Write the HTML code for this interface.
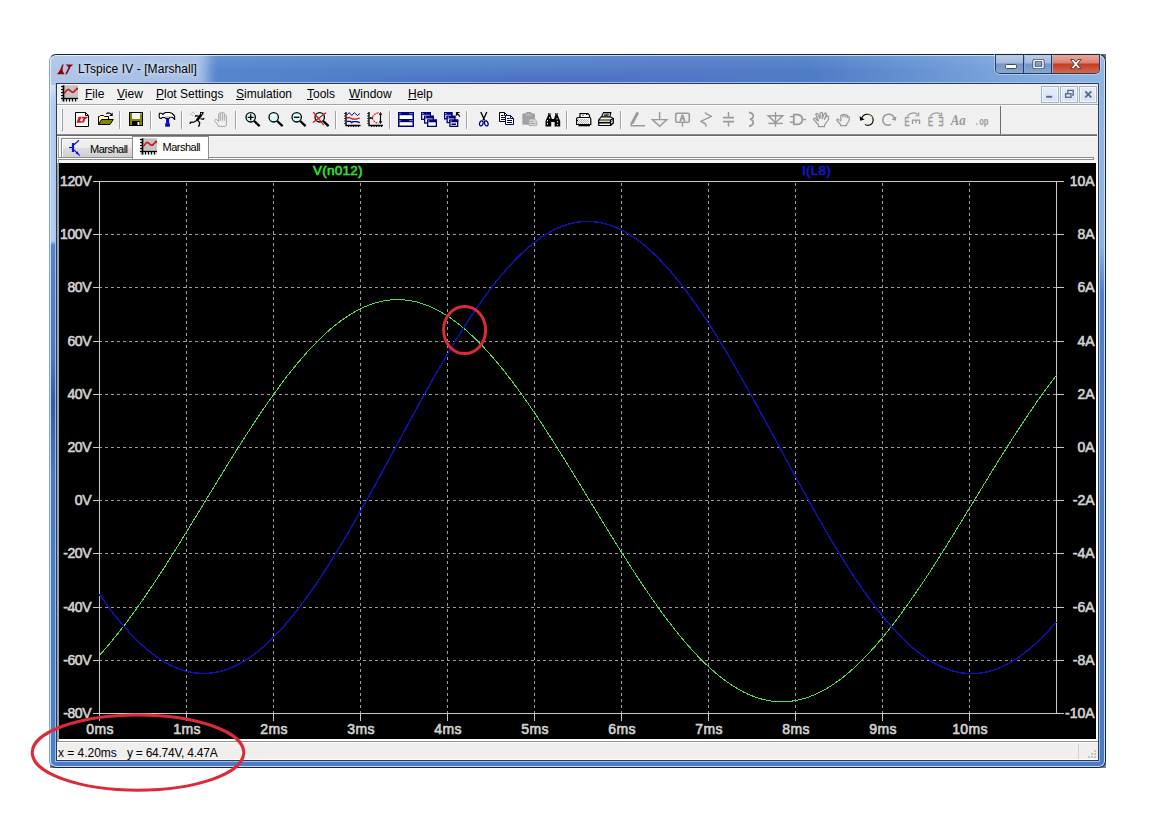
<!DOCTYPE html>
<html lang="en">
<head>
<meta charset="utf-8">
<title>LTspice IV - [Marshall]</title>
<style>
*{box-sizing:border-box;margin:0;padding:0}
html,body{width:1152px;height:824px;overflow:hidden;background:#fff}
body{position:relative;font-family:"Liberation Sans",sans-serif;font-size:12px;color:#000}
.abs{position:absolute}
#frame{position:absolute;left:49px;top:54px;width:1057px;height:714px;border-radius:7px;
  border:1px solid #1b2433;border-left-color:rgba(225,235,250,.35);
  background:
   radial-gradient(ellipse 240px 11px at 470px 26px,rgba(78,84,192,.42),rgba(78,84,192,0)) 0 0/100% 30px no-repeat,
   linear-gradient(to bottom,rgba(255,255,255,.10),rgba(255,255,255,0) 55%) 0 0/100% 30px no-repeat,
   linear-gradient(to right,#6a93d4 0px,#5886ce 120px,#5181c9 300px,#5180ca 450px,#5379c8 620px,#4f7cc6 760px,#6d99d6 900px,#86aee0 1000px,#8fb5e3 1057px) 0 0/100% 30px no-repeat,
   linear-gradient(to bottom,#b4cceb 0px,#b4cceb 186px,#5584cc 190px,#4a79c2 300px,#2f5ca8 350px,#4a79c2 420px,#4f7fc9 714px) 0 0/8px 100% no-repeat,
   linear-gradient(to bottom,#8fb5e3 0px,#8fb5e3 190px,#4f80c9 240px,#4a7ac4 714px) 100% 0/8px 100% no-repeat,
   #4c7cc5;
  box-shadow:inset 0 0 0 1px rgba(214,230,250,.9);overflow:hidden}
#glow{position:absolute;left:-14px;top:-10px;width:172px;height:48px;background:rgba(255,255,255,.47);filter:blur(6px);border-radius:8px}
#client{position:absolute;left:57px;top:84px;width:1041px;height:676px;background:#f0f0f0;
  box-shadow:0 0 0 1px #2b3b52,0 0 0 2px rgba(170,200,240,.85)}
#title{position:absolute;left:78px;top:60px;letter-spacing:.08px;font-size:12px;line-height:18px;white-space:nowrap;color:#000;
  text-shadow:0 0 5px rgba(255,255,255,.8),0 0 8px rgba(255,255,255,.6)}
/* caption buttons */
#capbtn{position:absolute;left:995px;top:54px;width:105px;height:20px;border:1px solid #2a3a55;border-top-color:#1b2433;border-radius:0 0 5px 5px;overflow:hidden;
  box-shadow:0 0 0 1px rgba(215,230,250,.55)}
#capbtn div{position:absolute;top:0;height:18px}
.cb{background:linear-gradient(to bottom,#bccde6 0,#a3bbdd 8px,#7495c7 9px,#86a6d3 18px)}
.cx{background:linear-gradient(to bottom,#eaa89d 0,#d98273 8px,#c43c25 9px,#d2694d 18px)}
/* menu */
#menubar{position:absolute;left:57px;top:84px;width:1041px;height:21px;background:#f0f0f0;border-bottom:1px solid #a4a4a4}
.mi{position:absolute;top:86px;font-size:12px;line-height:16px;white-space:nowrap}
.mi u{text-decoration:underline;text-underline-offset:1px}
.mdi{position:absolute;top:86px;width:18px;height:17px;background:linear-gradient(#e4edf8,#d6e3f4);border:1px solid #a6b2c6;box-shadow:inset 0 0 0 1px #f1f6fc}
/* toolbar */
#toolbar{position:absolute;left:57px;top:105px;width:944px;height:30px;background:#f0f0f0;border-right:1px solid #6d6d6d}
#mline{position:absolute;left:57px;top:105px;width:1041px;height:1px;background:#fdfdfd}
#tbline{position:absolute;left:57px;top:134px;width:1040px;height:3px;background:#686868;border-top:1px solid #8e8e8e;border-bottom:1px solid #fbfbfb}
.sep{position:absolute;top:111px;width:2px;height:18px;border-left:1px solid #a0a0a0;border-right:1px solid #fff}
.ic{position:absolute;top:112px;width:16px;height:15px;overflow:visible}
/* tabs */
.tab{position:absolute;font-family:"Liberation Sans",sans-serif;font-size:11px;white-space:nowrap;letter-spacing:-.5px}
/* plot */
#plotwrap{position:absolute;left:57px;top:163px;width:1041px;height:578px;background:#fff;border-left:2px solid #9aa0a8}
#plot{position:absolute;left:0;top:0;width:1037px;height:576px;background:#000}
svg text{font-family:"Liberation Sans",sans-serif}
.ax{font-weight:normal;font-size:14px;fill:#d2d2d2;stroke:#d2d2d2;stroke-width:.6px;letter-spacing:.35px}
.axl{letter-spacing:-.4px}
.axr{letter-spacing:0}
.axt{letter-spacing:.25px;font-size:13.5px}
/* status */
#status{position:absolute;left:57px;top:741px;width:1041px;height:19px;background:#f0efee;border-top:1px solid #8f8f8f;box-shadow:inset 0 1px 0 #fff,inset 0 -1px 0 #fff}
#stext,#stext2{position:absolute;left:58px;top:745px;font-size:12px;line-height:16px;white-space:pre;letter-spacing:-.25px}
#stext{letter-spacing:-.03px}
#stext2{left:127px}
</style>
</head>
<body>
<div class="abs" style="left:1101px;top:54px;width:5px;height:5px;background:#6a727c"></div>
<div class="abs" style="left:1101px;top:763px;width:5px;height:5px;background:#7a828c"></div>
<div class="abs" style="left:50px;top:763px;width:5px;height:5px;background:#7a828c"></div>
<div id="frame"><div id="glow"></div></div>
<div id="client"></div>

<!-- title bar -->
<svg class="abs" style="left:57px;top:63.500px" width="17" height="12" viewBox="0 0 17 12">
  <path d="M5.300 0.400L6.800 0.400Q4 5.800 7.600 10.200L0 10.200Q3.600 6 5.300 0.400Z" fill="#8e0404"/>
  <path d="M8.400 0.400H16.100L13.500 3.100L9.900 10.200H8.300L11.500 3.200Q10.200 1.500 8.400 0.400Z" fill="#8e0404"/>
</svg>
<div id="title">LTspice IV - [Marshall]</div>

<div id="capbtn">
  <div class="cb" style="left:0;width:28px;border-right:1px solid #2a3a55"></div>
  <div class="cb" style="left:29px;width:27px;border-right:1px solid #2a3a55"></div>
  <div class="cx" style="left:57px;width:46px"></div>
</div>
<svg class="abs" style="left:996px;top:55px" width="104" height="18" viewBox="0 0 104 18">
  <rect x="9.5" y="9.5" width="11" height="4" rx="1" fill="#fff" stroke="#3b4a63" stroke-width="1"/>
  <rect x="38" y="5.500" width="9" height="7" rx="0.800" fill="none" stroke="#3b4a63" stroke-width="3.200"/>
  <rect x="38" y="5.500" width="9" height="7" rx="0.800" fill="none" stroke="#fff" stroke-width="1.500"/>
  <rect x="40" y="7.500" width="5" height="3" fill="#7f9dcb"/>
  <path d="M74.5 4.5h3.2l2.1 2.7 2.1-2.7h3.2l-3.7 4.6 3.7 4.6h-3.2l-2.1-2.7-2.1 2.7h-3.2l3.7-4.6z" fill="#fff" stroke="#5a3a3a" stroke-width="1" stroke-linejoin="round"/>
</svg>

<!-- menu bar -->
<div id="menubar"></div>
<svg class="abs" style="left:61px;top:85px" width="17" height="17" viewBox="0 0 17 17">
  <rect x="0" y="0.300" width="17" height="16.400" fill="#e0e0e0"/>
  <rect x="3" y="0.300" width="14" height="13" fill="#c4c4c4"/>
  <path d="M2.500 0.300V16.600" stroke="#000" stroke-width="1.700" fill="none"/>
  <path d="M0 13.500H17" stroke="#000" stroke-width="1.300" fill="none"/>
  <path d="M0 1.500h2M0 4.500h2M0 7.500h2M0 10.500h2M5.500 14v2.600M8.500 14v2.600M11.500 14v2.600M14.500 14v2.600" stroke="#000" stroke-width="1.100"/>
  <path d="M3.200 8.600L6.500 4.600H8L11 7.100H12.500L16 3.600" stroke="#d81414" stroke-width="1.600" fill="none" stroke-linejoin="round"/>
  <circle cx="16" cy="3.600" r="1.100" fill="#d81414"/>
</svg>
<div class="mi" style="left:85px"><u>F</u>ile</div>
<div class="mi" style="left:117px"><u>V</u>iew</div>
<div class="mi" style="left:156px"><u>P</u>lot Settings</div>
<div class="mi" style="left:236px"><u>S</u>imulation</div>
<div class="mi" style="left:307px"><u>T</u>ools</div>
<div class="mi" style="left:349px"><u>W</u>indow</div>
<div class="mi" style="left:408px"><u>H</u>elp</div>
<div class="mdi" style="left:1041px"></div>
<div class="mdi" style="left:1060px"></div>
<div class="mdi" style="left:1079px"></div>
<svg class="abs" style="left:1041px;top:86px" width="56" height="17" viewBox="0 0 56 17">
  <rect x="5.200" y="9.800" width="6" height="1.900" fill="#5a6982"/>
  <path d="M26.800 7v-2.600h5.400v4.800h-1.200" stroke="#5a6982" stroke-width="1.300" fill="none"/>
  <rect x="24.600" y="7.700" width="5.400" height="3.600" fill="none" stroke="#5a6982" stroke-width="1.300"/>
  <path d="M44.300 5.400l6 6M50.300 5.400l-6 6" stroke="#5a6982" stroke-width="1.900"/>
</svg>

<!-- toolbar -->
<div id="toolbar"></div>
<div id="mline"></div>
<div id="tbline"></div>
<div class="abs" style="left:61px;top:109px;width:2px;height:22px;border-left:1px solid #fff;border-right:1px solid #a0a0a0;border-bottom:1px solid #a0a0a0"></div>
<div class="sep" style="left:119px"></div>
<div class="sep" style="left:150px"></div>
<div class="sep" style="left:181px"></div>
<div class="sep" style="left:235px"></div>
<div class="sep" style="left:335px"></div>
<div class="sep" style="left:389px"></div>
<div class="sep" style="left:466px"></div>
<div class="sep" style="left:566px"></div>
<div class="sep" style="left:620px"></div>
<!-- toolbar icons -->
<!-- new -->
<svg class="ic" style="left:75px" viewBox="0 0 16 15">
  <path d="M0.500 0.500H10.500L13.500 3.500V14.500H0.500Z" fill="#fff" stroke="#000" stroke-width="1"/>
  <path d="M10.500 0.500V3.500H13.500" fill="none" stroke="#000" stroke-width="1"/>
  <path d="M3.700 4.800H6.700L4.700 9H6.900L6.100 10.800H1.500ZM7.200 4.800H12.900L12.100 6.600H10.700L8.700 10.800H6.500L8.500 6.600H6.400Z" fill="#e01020"/>
</svg>
<!-- open -->
<svg class="ic" style="left:98px" viewBox="0 0 16 15">
  <path d="M0.500 12.500V4.500H1.500L2.500 3.500H5.500L6.500 4.500H10.500V7.500" fill="#ffff9c" stroke="#000" stroke-width="1"/>
  <path d="M0.500 12.500L3.500 7.500H15.300L12 12.500Z" fill="#848400" stroke="#000" stroke-width="1" stroke-linejoin="round"/>
  <path d="M8.300 1.800Q10.500 -0.300 13.300 2.200" fill="none" stroke="#000" stroke-width="1.100"/>
  <path d="M14.700 0.500V4H11.200Z" fill="#000"/>
</svg>
<!-- save -->
<svg class="ic" style="left:129px" viewBox="0 0 16 15">
  <rect x="0.500" y="0.500" width="13" height="13" fill="#848400" stroke="#000" stroke-width="1"/>
  <rect x="3" y="1" width="8" height="6" fill="#f4f4f4"/>
  <rect x="11.800" y="1.300" width="1" height="1.200" fill="#e8e8e8"/>
  <rect x="3" y="9" width="8" height="4.500" fill="#000"/>
  <rect x="8.500" y="10" width="2" height="3" fill="#f4f4f4"/>
</svg>
<!-- hammer -->
<svg class="ic" style="left:160px" viewBox="0 0 16 15">
  <path d="M-0.700 1.300L1.700 1.200L2.800 2.500L5.200 0.500H9.750L12.200 1.500L14.600 4L14.700 7.500L13.800 6.700L12.700 5.300H9.750L9 6.400H5.750L4.700 5.500L2.500 5.300L1.200 6.500L-0.300 6.100L-0.800 4.800Z" fill="#fff" stroke="#000" stroke-width="1.100" stroke-linejoin="round"/>
  <path d="M5 4.700H10.500" stroke="#c4c4c4" stroke-width="1.100"/>
  <rect x="6.100" y="6.400" width="3" height="5" fill="#0808b8"/>
  <rect x="5.200" y="11.200" width="4.700" height="3.500" fill="#0808c0"/>
</svg>
<!-- run -->
<svg class="ic" style="left:191px" viewBox="0 0 16 15">
  <path d="M9 0H12.900L12.300 1.200V2.700H9Z" fill="#000"/>
  <rect x="10" y="0.900" width="1" height="0.900" fill="#fff"/>
  <path d="M10.300 2.600L5.900 8.500" stroke="#000" stroke-width="2.600" fill="none"/>
  <path d="M8.400 4.300L5 3.700L4 4.600" stroke="#000" stroke-width="1.200" fill="none"/>
  <path d="M9.600 6.700L12.200 7.400L13.300 6.100" stroke="#000" stroke-width="1.200" fill="none"/>
  <path d="M6 8.300L2.800 10.200L-0.600 10.400L-0.800 11.900" stroke="#000" stroke-width="1.300" fill="none"/>
  <path d="M6.900 8.600L8.700 10.700L8.300 13.200L7.400 14.700" stroke="#000" stroke-width="1.300" fill="none"/>
  <path d="M1.200 0.200L3 0.500M-0.800 2L1.200 2.400M3.200 1.200L3.900 1.700M1.200 3.200L2 3.700" stroke="#a8a8a8" stroke-width="0.900" fill="none"/>
</svg>
<!-- hand (disabled) -->
<svg class="ic" style="left:214px" viewBox="0 0 16 15">
  <path d="M4.700 9.600V1.800Q5.500 0.900 6.300 1.800V8.800M6.300 1.800V0.800Q7.300 -0.200 8.300 0.800V8.800M8.300 1Q9.300 0 10.300 1.100V8.800M10.300 3.500Q11.400 2.500 12.400 3.700V13L11.600 14.400H4.300V13.800L0.500 8.400Q1.300 6.900 2.400 7.400L4.700 9.600" fill="none" stroke="#a4a4a4" stroke-width="1" stroke-linejoin="round"/>
</svg>
<!-- zoom in -->
<svg class="ic" style="left:245px" viewBox="0 0 16 15">
  <circle cx="5.700" cy="5.300" r="4.700" fill="#d6fbfb" stroke="#000" stroke-width="1.300"/>
  <path d="M9.200 9L14.600 14.200" stroke="#000" stroke-width="2.300"/>
  <path d="M2.700 5.300H8.700M5.700 2.300V8.300" stroke="#000" stroke-width="1.300"/>
</svg>
<!-- zoom -->
<svg class="ic" style="left:268px" viewBox="0 0 16 15">
  <circle cx="5.700" cy="5.300" r="4.700" fill="#d6fbfb" stroke="#000" stroke-width="1.300"/>
  <path d="M9.200 9L14.600 14.200" stroke="#000" stroke-width="2.300"/>
  <path d="M3 6L6.500 2.500" stroke="#fff" stroke-width="1.400"/>
</svg>
<!-- zoom out -->
<svg class="ic" style="left:291px" viewBox="0 0 16 15">
  <circle cx="5.700" cy="5.300" r="4.700" fill="#d6fbfb" stroke="#000" stroke-width="1.300"/>
  <path d="M9.200 9L14.600 14.200" stroke="#000" stroke-width="2.300"/>
  <path d="M2.900 5.300H8.500" stroke="#000" stroke-width="1.300"/>
</svg>
<!-- zoom cancel -->
<svg class="ic" style="left:314px" viewBox="0 0 16 15">
  <circle cx="5.700" cy="5.300" r="4.700" fill="#d6fbfb" stroke="#000" stroke-width="1.300"/>
  <path d="M9.200 9L14.600 14.200" stroke="#000" stroke-width="2.300"/>
  <path d="M-0.700 0.200L9.800 13.200M-1 10.600L12 0.800" stroke="#e01010" stroke-width="1.300"/>
</svg>
<!-- plot pane 1 -->
<svg class="ic" style="left:344px" viewBox="0 0 16 15">
  <path d="M2 0V13.500H16.500" stroke="#000" stroke-width="1.400" fill="none"/>
  <path d="M0.300 1.500H1.500M0.300 4H1.500M0.300 6.500H1.500M0.300 9H1.500M0.300 11.500H1.500M4.500 14V15M7 14V15M9.500 14V15M12 14V15M14.500 14V15" stroke="#000" stroke-width="1"/>
  <path d="M2.800 3L5.200 0.600L7.800 3.400L10.400 0.600L13.400 3.600L15.800 1.600" stroke="#000080" stroke-width="1" fill="none"/>
  <path d="M2.800 6L5.500 5.500L8.500 7L12 7.200L15.800 6" stroke="#e01010" stroke-width="1.300" fill="none"/>
  <path d="M2.800 9.300H6.500L7.500 10.600L9 9.600H13L15.800 10.600" stroke="#000090" stroke-width="1.300" fill="none"/>
</svg>
<!-- plot pane 2 -->
<svg class="ic" style="left:367px" viewBox="0 0 16 15">
  <path d="M2 0V13.500H16" stroke="#000" stroke-width="1.400" fill="none"/>
  <path d="M0.300 1.500H1.500M0.300 4H1.500M0.300 6.500H1.500M0.300 9H1.500M0.300 11.500H1.500M4.500 14V15M7 14V15M9.500 14V15M12 14V15M14.500 14V15" stroke="#000" stroke-width="1"/>
  <path d="M11.500 0.600Q5.500 2.500 5.500 6Q5.500 9.500 11.500 11.600" stroke="#e01010" stroke-width="1.100" stroke-dasharray="2 0.800" fill="none"/>
  <path d="M13.500 1.500V10.500" stroke="#000" stroke-width="1.200"/>
  <path d="M13.500 0L15.300 2.800H11.700ZM13.500 12L15.300 9.200H11.700Z" fill="#000"/>
  <path d="M3 6H5.500M3.800 5L3 6L3.800 7M4.700 5L5.500 6L4.700 7" stroke="#000" stroke-width="0.900" fill="none"/>
</svg>
<!-- tile -->
<svg class="ic" style="left:398px" viewBox="0 0 16 15">
  <rect x="0.750" y="0.750" width="14.500" height="13.500" fill="#fff" stroke="#000080" stroke-width="1.500"/>
  <rect x="0" y="0" width="16" height="3.200" fill="#000080"/>
  <rect x="0" y="7" width="16" height="3.200" fill="#000080"/>
  <g fill="#fff"><rect x="1.500" y="1.200" width="1" height="1"/><rect x="11.500" y="1.200" width="1" height="1"/><rect x="13.500" y="1.200" width="1" height="1"/><rect x="1.500" y="8.200" width="1" height="1"/><rect x="11.500" y="8.200" width="1" height="1"/><rect x="13.500" y="8.200" width="1" height="1"/></g>
</svg>
<!-- cascade -->
<svg class="ic" style="left:421px" viewBox="0 0 16 15">
  <g stroke="#000080" stroke-width="1.300" fill="#fff">
   <rect x="0.650" y="0.650" width="8.700" height="6.700"/><rect x="3.650" y="4.350" width="8.700" height="6.700"/><rect x="6.650" y="8.150" width="8.700" height="6.200"/>
  </g>
  <g fill="#000080"><rect x="0" y="0" width="10" height="2.800"/><rect x="3" y="3.700" width="10" height="2.800"/><rect x="6" y="7.500" width="10" height="2.800"/></g>
  <g fill="#fff"><rect x="1.300" y="1" width="1" height="1"/><rect x="4.300" y="4.700" width="1" height="1"/><rect x="7.300" y="8.500" width="1" height="1"/></g>
</svg>
<!-- cascade + arrow -->
<svg class="ic" style="left:444px" viewBox="0 0 16 15">
  <g stroke="#000080" stroke-width="1.300" fill="#fff">
   <rect x="0.650" y="0.650" width="7.200" height="6.200"/><rect x="3.150" y="4.350" width="7.700" height="6.200"/><rect x="5.950" y="8.150" width="7.700" height="6.200"/>
  </g>
  <g fill="#000080"><rect x="0" y="0" width="8.500" height="2.800"/><rect x="2.500" y="3.700" width="9" height="2.800"/><rect x="5.300" y="7.500" width="9" height="2.800"/></g>
  <g fill="#fff"><rect x="1.300" y="1" width="1" height="1"/><rect x="3.800" y="4.700" width="1" height="1"/><rect x="6.600" y="8.500" width="1" height="1"/></g>
  <rect x="7.500" y="11.500" width="4.500" height="1.500" fill="#000"/>
  <path d="M12.300 0.500H15.500M12.500 0.300V3.800M12.600 0.600L16 4.600" stroke="#000" stroke-width="1.200" fill="none"/>
</svg>
<!-- cut -->
<svg class="ic" style="left:476px" viewBox="0 0 16 15">
  <path d="M4.800 0L8.600 8.200M10.800 0L7 8.200" stroke="#000" stroke-width="1.400" fill="none"/>
  <ellipse cx="5.300" cy="11.400" rx="1.700" ry="2.600" fill="none" stroke="#000080" stroke-width="1.300" transform="rotate(20 5.300 11.400)"/>
  <ellipse cx="10.300" cy="11.400" rx="1.700" ry="2.600" fill="none" stroke="#000080" stroke-width="1.300" transform="rotate(-20 10.300 11.400)"/>
</svg>
<!-- copy -->
<svg class="ic" style="left:499px" viewBox="0 0 16 15">
  <path d="M0.500 0.500H5.500L8.500 3.500V9.500H0.500Z" fill="#fff" stroke="#000" stroke-width="1"/>
  <path d="M5.500 0.500V3.500H8.500" fill="none" stroke="#000" stroke-width="1"/>
  <path d="M2 3.500H4.500M2 5.500H6M2 7.500H6" stroke="#000" stroke-width="1"/>
  <path d="M6.500 3.500H11.500L14.500 6.500V12.500H6.500Z" fill="#fff" stroke="#000080" stroke-width="1"/>
  <path d="M11.500 3.500V6.500H14.500" fill="none" stroke="#000080" stroke-width="1"/>
  <path d="M8 6.500H10.500M8 8.500H13M8 10.500H13" stroke="#000" stroke-width="1"/>
</svg>
<!-- paste (disabled) -->
<svg class="ic" style="left:522px" viewBox="0 0 16 15">
  <rect x="0.300" y="1.300" width="12.700" height="11.500" rx="1.500" fill="#a2a2a2"/>
  <rect x="4" y="0" width="5.500" height="2.600" rx="1" fill="#a2a2a2"/>
  <rect x="4" y="2.400" width="5.500" height="1" fill="#c8c8c8"/>
  <path d="M7 7H12.500L14.800 9.200V13.600H7Z" fill="#d4d4d4" stroke="#a2a2a2" stroke-width="0.800"/>
  <path d="M8.500 9.500H11M8.500 11.500H13" stroke="#a2a2a2" stroke-width="1"/>
</svg>
<!-- find -->
<svg class="ic" style="left:545px" viewBox="0 0 16 15">
  <path d="M3.200 1H5.500V3L6.800 7H9L10.300 3V1H12.600V3L15.200 9V14.500H9.600V10H6.200V14.500H0.500V9L3.200 3Z" fill="#000"/>
  <path d="M4 1.800H4.800M11 1.800H11.800M2.500 8V9.500M2.500 11V12.500M12 6V7.500M12.600 9V10.500M12.600 12V13.200M4.500 5V6.500" stroke="#fff" stroke-width="0.900"/>
</svg>
<!-- print setup -->
<svg class="ic" style="left:576px" viewBox="0 0 16 15">
  <path d="M4 5V1.500H12L13.500 3.500V5" fill="#fff" stroke="#000" stroke-width="1.200"/>
  <path d="M6 2.500L7 3.500L8 2.500M10 2.500H11.500" stroke="#000" stroke-width="0.900" fill="none"/>
  <path d="M2.500 5.500H13.500Q14.800 5.500 14.800 7V12.500H0.600V7.500Q0.600 5.500 2.500 5.500Z" fill="#fff" stroke="#000" stroke-width="1.200"/>
  <path d="M2 7.500H13M2 9.500H13M2 11.500H13" stroke="#b4b4b4" stroke-width="1" stroke-dasharray="1 1"/>
  <path d="M3 8.500H13M3 10.500H13" stroke="#b4b4b4" stroke-width="1" stroke-dasharray="1 1"/>
  <path d="M2.500 13.600H14" stroke="#000" stroke-width="1.400"/>
  <path d="M0.600 8.500H2" stroke="#000" stroke-width="1"/>
</svg>
<!-- print -->
<svg class="ic" style="left:598px" viewBox="0 0 16 15">
  <path d="M3.500 5L5.500 0.600H12.800L11.800 5Z" fill="#fff" stroke="#000" stroke-width="1.100"/>
  <path d="M6.300 2.200H11M5.800 3.700H10.500" stroke="#000" stroke-width="0.900"/>
  <path d="M0.700 8L3 5H12.500L15.300 6.500V11L12.500 13.500H0.700Z" fill="#fff" stroke="#000" stroke-width="1.200" stroke-linejoin="round"/>
  <path d="M0.700 8H12.500V13.500M12.500 8L15.300 6.500" stroke="#000" stroke-width="1.100" fill="none"/>
  <path d="M1 10.700H12.300" stroke="#000" stroke-width="1.700"/>
  <path d="M6.500 9.600H9.500" stroke="#e0e000" stroke-width="1.100"/>
  <path d="M13.300 9.500L14.600 8.500M13.300 12L14.600 11" stroke="#000" stroke-width="0.900"/>
</svg>
<!-- wire pencil (disabled) -->
<svg class="ic" style="left:630px" viewBox="0 0 16 15">
  <path d="M7.800 0.300L2 11.500" stroke="#9a9a9a" stroke-width="2.85" fill="none"/>
  <path d="M1.200 10.500V13.700H15" stroke="#9a9a9a" stroke-width="1.45" fill="none"/>
</svg>
<!-- ground -->
<svg class="ic" style="left:652px" viewBox="0 0 16 15">
  <path d="M7.600 0V7.500M0.400 7.600H14.800L7.600 14.300Z" stroke="#9a9a9a" stroke-width="1.45" fill="none" stroke-linejoin="miter"/>
</svg>
<!-- label -->
<svg class="ic" style="left:675px" viewBox="0 0 16 15">
  <rect x="0.700" y="1.200" width="13.600" height="9" rx="1.200" fill="none" stroke="#9a9a9a" stroke-width="1.55"/>
  <path d="M7.500 10.200V14.600" stroke="#9a9a9a" stroke-width="1.45"/>
  <text x="7.500" y="9" text-anchor="middle" font-size="9" font-weight="bold" fill="#909090" stroke="#909090" stroke-width="0.350" style="font-family:'Liberation Mono',monospace">A</text>
</svg>
<!-- resistor -->
<svg class="ic" style="left:699px" viewBox="0 0 16 15">
  <path d="M6.300 0.200L7 1.600L12.400 4.400L1.800 9.400L6.600 12L7 14.600" stroke="#9a9a9a" stroke-width="1.45" fill="none" stroke-linejoin="round"/>
</svg>
<!-- capacitor -->
<svg class="ic" style="left:722px" viewBox="0 0 16 15">
  <path d="M6.500 0V5M6.500 10.300V14.600" stroke="#9a9a9a" stroke-width="1.45"/>
  <path d="M1 5.600H12M1 9.700H12" stroke="#9a9a9a" stroke-width="1.75"/>
</svg>
<!-- inductor -->
<svg class="ic" style="left:745px" viewBox="0 0 16 15">
  <path d="M4 0.400Q8.500 1.500 8.300 4.200Q8 6.600 5 7.200Q8.500 8 8.300 10.600Q8 13.200 4 14.400" stroke="#9a9a9a" stroke-width="1.65" fill="none"/>
</svg>
<!-- diode -->
<svg class="ic" style="left:768px" viewBox="0 0 16 15">
  <path d="M7.500 0V14.800" stroke="#9a9a9a" stroke-width="1.35"/>
  <path d="M0.300 3.700H14.700L7.500 10.700Z" fill="none" stroke="#9a9a9a" stroke-width="1.55"/>
  <path d="M0.300 11.400H14.700" stroke="#9a9a9a" stroke-width="1.45"/>
</svg>
<!-- gate -->
<svg class="ic" style="left:790px" viewBox="0 0 16 15">
  <path d="M3.800 2.600H7.500Q12.300 3 12.300 7.500Q12.300 12 7.500 12.400H3.800Z" fill="none" stroke="#9a9a9a" stroke-width="1.75"/>
  <path d="M0 4.600H3.500M0 10.200H3.500M12.500 7.500H16" stroke="#9a9a9a" stroke-width="1.45"/>
</svg>
<!-- move hand -->
<svg class="ic" style="left:813px" viewBox="0 0 16 15">
  <path d="M4.500 9L2.500 6.200Q1 5.600 0.300 7.200L5.500 13V14.500H11.500V13L15.500 7.500V4.500Q14.500 3.200 13.500 4.500L11 8M11.500 7.500L13.500 2Q12.800 0.500 11.500 1.200L9 7M9.200 6.500L9.500 1.200Q8.500 -0.200 7.300 1L7 6.500M7 7L4.800 1.800Q3.500 1 2.800 2.300L5.500 9.500" fill="none" stroke="#9a9a9a" stroke-width="1.25" stroke-linejoin="round"/>
</svg>
<!-- drag hand -->
<svg class="ic" style="left:836px" viewBox="0 0 16 15">
  <path d="M3.500 8.500L1.800 7Q0.500 7 0.800 8.300L4.500 12.500V13.700H10.500V12.500L13.200 8.500V5Q12.300 3.800 11.300 4.800V6M11.300 5.500V3.600Q10.200 2.500 9.200 3.500V5.500M9.200 5V2.800Q8 1.800 7 2.800V5.500M7 5V3.500Q5.800 2.500 4.800 3.600V9.500" fill="none" stroke="#9a9a9a" stroke-width="1.25" stroke-linejoin="round"/>
</svg>
<!-- undo -->
<svg class="ic" style="left:859px" viewBox="0 0 16 15">
  <path d="M2.600 6.200Q4.500 1.800 9 2.300Q14 3.200 14.200 8Q14 12.800 9.300 13.300Q7.200 13.400 6 12.300" fill="none" stroke="#000" stroke-width="1.150"/>
  <path d="M0.600 4.200L1.200 8.800L5.600 7.600Z" fill="#000"/>
  <path d="M9.500 2.400Q12.500 3 13.500 6" fill="none" stroke="#e6e878" stroke-width="0.700"/>
</svg>
<!-- redo -->
<svg class="ic" style="left:882px" viewBox="0 0 16 15">
  <path d="M12.400 6.200Q10.500 1.800 6 2.300Q1 3.200 0.800 8Q1 12.800 5.700 13.300Q7.800 13.400 9 12.300" fill="none" stroke="#9a9a9a" stroke-width="1.55"/>
  <path d="M14.400 4.200L13.800 8.800L9.400 7.600Z" fill="#9a9a9a"/>
</svg>
<!-- rotate -->
<svg class="ic" style="left:905px" viewBox="0 0 17 15">
  <text x="-0.500" y="14.600" font-size="13" font-weight="normal" fill="#9a9a9a" stroke="#9a9a9a" stroke-width="0.550" textLength="5.300" lengthAdjust="spacingAndGlyphs">E</text>
  <path d="M7.500 8.200H16M8 8.200V12.200M11.800 8.200V11.200M15.500 8.200V12.200" stroke="#9a9a9a" stroke-width="1.45" fill="none"/>
  <path d="M2.500 3.500Q8 -1.500 13.500 2" stroke="#9a9a9a" stroke-width="1.25" fill="none"/>
  <path d="M14.500 0V3.500H11" stroke="#9a9a9a" stroke-width="1.25" fill="none"/>
</svg>
<!-- mirror -->
<svg class="ic" style="left:928px" viewBox="0 0 17 15">
  <text x="0" y="14.600" font-size="13" font-weight="normal" fill="#9a9a9a" stroke="#9a9a9a" stroke-width="0.550" textLength="5.300" lengthAdjust="spacingAndGlyphs">E</text>
  <text x="0" y="14.600" font-size="13" font-weight="normal" fill="#9a9a9a" stroke="#9a9a9a" stroke-width="0.550" textLength="5.300" lengthAdjust="spacingAndGlyphs" transform="translate(16.500 0) scale(-1 1)">E</text>
  <path d="M2.500 3.500Q8 -1.500 13.500 2" stroke="#9a9a9a" stroke-width="1.25" fill="none"/>
  <path d="M14.500 0V3.500H11" stroke="#9a9a9a" stroke-width="1.25" fill="none"/>
</svg>
<!-- text -->
<svg class="ic" style="left:951px" viewBox="0 0 16 15">
  <text x="-0.300" y="12.800" font-size="15" font-weight="bold" font-style="italic" fill="#9a9a9a" textLength="15" lengthAdjust="spacingAndGlyphs" style="font-family:'Liberation Serif',serif">Aa</text>
</svg>
<!-- spice directive -->
<svg class="ic" style="left:974px" viewBox="0 0 16 15">
  <text x="0.500" y="12.600" font-size="11" font-weight="bold" fill="#9a9a9a" textLength="14" lengthAdjust="spacingAndGlyphs" style="font-family:'Liberation Mono',monospace">.op</text>
</svg>
<!-- tabs -->
<div class="abs" style="left:58px;top:137px;width:1039px;height:24px;border-left:1px solid #a0a0a0;background:#f0f0f0;box-shadow:inset 1px 0 0 #fff"></div>
<div class="abs" style="left:58px;top:157px;width:1036px;height:3px;border:1px solid #8c8c8c;border-left:none;background:#fff"></div>
<div class="abs" style="left:58px;top:160px;width:1040px;height:3px;background:#f7f7f7;border-left:1px solid #a0a0a0"></div>
<div class="abs" style="left:61px;top:138px;width:72px;height:20px;border:1px solid #8e8e8e;box-shadow:inset 1px 1px 0 #fff;background:linear-gradient(to bottom,#f2f2f2 0,#ebebeb 50%,#dddddd 51%,#cfcfcf 100%)"></div>
<div class="abs" style="left:132px;top:136px;width:77px;height:23px;border:1px solid #8e8e8e;border-bottom:none;background:#fff"></div>
<svg class="abs" style="left:68px;top:139px" width="14" height="18" viewBox="0 0 14 18">
  <path d="M1 8.500H4.500" stroke="#1010e0" stroke-width="1.200" fill="none"/>
  <path d="M5 4V13" stroke="#1010e0" stroke-width="2.200" fill="none"/>
  <path d="M6 5.700L11 1.200M6 10.800L11.800 16.600" stroke="#1010e0" stroke-width="1.200" fill="none"/>
  <path d="M10.800 15.700L7.600 14.400L9.700 12.300Z" fill="#1010e0"/>
</svg>
<div class="tab" style="left:90px;top:144px;line-height:11px">Marshall</div>
<svg class="abs" style="left:140px;top:138px" width="17" height="17" viewBox="0 0 17 17">
  <rect x="0" y="0.300" width="17" height="16.400" fill="#e0e0e0"/>
  <rect x="3" y="0.300" width="14" height="13" fill="#c4c4c4"/>
  <path d="M2.500 0.300V16.600" stroke="#000" stroke-width="1.700" fill="none"/>
  <path d="M0 13.500H17" stroke="#000" stroke-width="1.300" fill="none"/>
  <path d="M0 1.500h2M0 4.500h2M0 7.500h2M0 10.500h2M5.500 14v2.600M8.500 14v2.600M11.500 14v2.600M14.500 14v2.600" stroke="#000" stroke-width="1.100"/>
  <path d="M3.200 8.600L6.500 4.600H8L11 7.100H12.500L16 3.600" stroke="#d81414" stroke-width="1.600" fill="none" stroke-linejoin="round"/>
  <circle cx="16" cy="3.600" r="1.100" fill="#d81414"/>
</svg>
<div class="tab" style="left:162.5px;top:142px;line-height:11px">Marshall</div>

<!-- plot -->
<div id="plotwrap"></div>
<svg class="abs" style="left:59px;top:163px" width="1037" height="576" viewBox="0 0 1037 576">
<rect width="1037" height="576" fill="#000"/>
<path d="M127.5 20V549.5 M214.5 20V549.5 M301.5 20V549.5 M388.5 20V549.5 M475.5 20V549.5 M562.5 20V549.5 M649.5 20V549.5 M736.5 20V549.5 M823.5 20V549.5 M910.5 20V549.5 M40 71.5H996.5 M40 124.5H996.5 M40 178.5H996.5 M40 231.5H996.5 M40 284.5H996.5 M40 337.5H996.5 M40 390.5H996.5 M40 444.5H996.5 M40 497.5H996.5" stroke="#9c9c9c" stroke-width="1" stroke-dasharray="3 3" fill="none" shape-rendering="crispEdges"/>
<path d="M40.5 18.5H997.5V550.5H40.5Z M33.5 18.5H40.5M997.5 18.5H1004.5 M33.5 71.5H40.5M997.5 71.5H1004.5 M33.5 124.5H40.5M997.5 124.5H1004.5 M33.5 178.5H40.5M997.5 178.5H1004.5 M33.5 231.5H40.5M997.5 231.5H1004.5 M33.5 284.5H40.5M997.5 284.5H1004.5 M33.5 337.5H40.5M997.5 337.5H1004.5 M33.5 390.5H40.5M997.5 390.5H1004.5 M33.5 444.5H40.5M997.5 444.5H1004.5 M33.5 497.5H40.5M997.5 497.5H1004.5 M33.5 550.5H40.5M997.5 550.5H1004.5 M40.5 550.5V557.5 M127.5 550.5V557.5 M214.5 550.5V557.5 M301.5 550.5V557.5 M388.5 550.5V557.5 M475.5 550.5V557.5 M562.5 550.5V557.5 M649.5 550.5V557.5 M736.5 550.5V557.5 M823.5 550.5V557.5 M910.5 550.5V557.5" stroke="#c8c8c8" stroke-width="1" fill="none" shape-rendering="crispEdges"/>
<path d="M40.5 492.3 L42.7 489.9 L44.8 487.4 L47.0 484.9 L49.2 482.4 L51.4 479.8 L53.5 477.1 L55.7 474.5 L57.9 471.8 L60.1 469.0 L62.2 466.2 L64.4 463.4 L66.6 460.6 L68.8 457.7 L70.9 454.7 L73.1 451.8 L75.3 448.8 L77.5 445.7 L79.7 442.7 L81.8 439.6 L84.0 436.4 L86.2 433.3 L88.3 430.1 L90.5 426.9 L92.7 423.6 L94.9 420.4 L97.1 417.1 L99.2 413.8 L101.4 410.4 L103.6 407.1 L105.8 403.7 L107.9 400.3 L110.1 396.9 L112.3 393.4 L114.4 390.0 L116.6 386.5 L118.8 383.0 L121.0 379.5 L123.1 376.0 L125.3 372.5 L127.5 368.9 L129.7 365.4 L131.9 361.8 L134.0 358.3 L136.2 354.7 L138.4 351.1 L140.6 347.6 L142.7 344.0 L144.9 340.4 L147.1 336.8 L149.2 333.3 L151.4 329.7 L153.6 326.1 L155.8 322.5 L157.9 319.0 L160.1 315.4 L162.3 311.9 L164.5 308.3 L166.6 304.8 L168.8 301.2 L171.0 297.7 L173.2 294.2 L175.3 290.8 L177.5 287.3 L179.7 283.8 L181.9 280.4 L184.0 277.0 L186.2 273.6 L188.4 270.2 L190.6 266.8 L192.8 263.5 L194.9 260.2 L197.1 256.9 L199.3 253.6 L201.5 250.4 L203.6 247.2 L205.8 244.0 L208.0 240.9 L210.1 237.7 L212.3 234.7 L214.5 231.6 L216.7 228.6 L218.9 225.6 L221.0 222.6 L223.2 219.7 L225.4 216.8 L227.5 214.0 L229.7 211.2 L231.9 208.4 L234.1 205.7 L236.2 203.1 L238.4 200.4 L240.6 197.8 L242.8 195.3 L245.0 192.8 L247.1 190.3 L249.3 187.9 L251.5 185.6 L253.6 183.2 L255.8 181.0 L258.0 178.8 L260.2 176.6 L262.4 174.5 L264.5 172.4 L266.7 170.4 L268.9 168.4 L271.0 166.5 L273.2 164.7 L275.4 162.9 L277.6 161.2 L279.8 159.5 L281.9 157.8 L284.1 156.3 L286.3 154.8 L288.5 153.3 L290.6 151.9 L292.8 150.6 L295.0 149.3 L297.2 148.1 L299.3 146.9 L301.5 145.8 L303.7 144.8 L305.8 143.8 L308.0 142.9 L310.2 142.0 L312.4 141.2 L314.6 140.5 L316.7 139.8 L318.9 139.2 L321.1 138.7 L323.2 138.2 L325.4 137.8 L327.6 137.4 L329.8 137.1 L331.9 136.9 L334.1 136.7 L336.3 136.6 L338.5 136.6 L340.7 136.6 L342.8 136.7 L345.0 136.9 L347.2 137.1 L349.3 137.4 L351.5 137.7 L353.7 138.1 L355.9 138.6 L358.1 139.1 L360.2 139.7 L362.4 140.4 L364.6 141.1 L366.8 141.9 L368.9 142.7 L371.1 143.6 L373.3 144.6 L375.4 145.6 L377.6 146.7 L379.8 147.9 L382.0 149.1 L384.2 150.4 L386.3 151.7 L388.5 153.1 L390.7 154.5 L392.8 156.0 L395.0 157.6 L397.2 159.2 L399.4 160.9 L401.6 162.6 L403.7 164.4 L405.9 166.2 L408.1 168.1 L410.2 170.1 L412.4 172.1 L414.6 174.1 L416.8 176.2 L418.9 178.4 L421.1 180.6 L423.3 182.9 L425.5 185.2 L427.7 187.5 L429.8 189.9 L432.0 192.4 L434.2 194.9 L436.3 197.4 L438.5 200.0 L440.7 202.6 L442.9 205.3 L445.1 208.0 L447.2 210.8 L449.4 213.6 L451.6 216.4 L453.8 219.3 L455.9 222.2 L458.1 225.1 L460.3 228.1 L462.5 231.1 L464.6 234.2 L466.8 237.2 L469.0 240.3 L471.2 243.5 L473.3 246.7 L475.5 249.9 L477.7 253.1 L479.8 256.4 L482.0 259.6 L484.2 262.9 L486.4 266.3 L488.5 269.6 L490.7 273.0 L492.9 276.4 L495.1 279.8 L497.2 283.3 L499.4 286.7 L501.6 290.2 L503.8 293.6 L506.0 297.1 L508.1 300.7 L510.3 304.2 L512.5 307.7 L514.7 311.2 L516.8 314.8 L519.0 318.3 L521.2 321.9 L523.3 325.5 L525.5 329.0 L527.7 332.6 L529.9 336.2 L532.0 339.8 L534.2 343.3 L536.4 346.9 L538.6 350.5 L540.8 354.1 L542.9 357.6 L545.1 361.2 L547.3 364.7 L549.5 368.3 L551.6 371.8 L553.8 375.3 L556.0 378.8 L558.1 382.3 L560.3 385.8 L562.5 389.3 L564.7 392.7 L566.9 396.1 L569.0 399.5 L571.2 402.9 L573.4 406.3 L575.6 409.7 L577.7 413.0 L579.9 416.3 L582.1 419.6 L584.2 422.8 L586.4 426.0 L588.6 429.2 L590.8 432.4 L592.9 435.6 L595.1 438.7 L597.3 441.7 L599.5 444.8 L601.6 447.8 L603.8 450.8 L606.0 453.7 L608.2 456.6 L610.4 459.5 L612.5 462.3 L614.7 465.1 L616.9 467.8 L619.1 470.5 L621.2 473.2 L623.4 475.8 L625.6 478.4 L627.8 480.9 L629.9 483.4 L632.1 485.9 L634.3 488.3 L636.4 490.6 L638.6 492.9 L640.8 495.1 L643.0 497.3 L645.1 499.5 L647.3 501.6 L649.5 503.6 L651.7 505.6 L653.9 507.6 L656.0 509.5 L658.2 511.3 L660.4 513.1 L662.6 514.8 L664.7 516.5 L666.9 518.1 L669.1 519.6 L671.2 521.1 L673.4 522.6 L675.6 523.9 L677.8 525.2 L679.9 526.5 L682.1 527.7 L684.3 528.9 L686.5 529.9 L688.6 531.0 L690.8 531.9 L693.0 532.8 L695.2 533.6 L697.4 534.4 L699.5 535.1 L701.7 535.8 L703.9 536.4 L706.1 536.9 L708.2 537.3 L710.4 537.7 L712.6 538.1 L714.8 538.3 L716.9 538.6 L719.1 538.7 L721.3 538.8 L723.4 538.8 L725.6 538.7 L727.8 538.6 L730.0 538.5 L732.1 538.2 L734.3 537.9 L736.5 537.6 L738.7 537.1 L740.9 536.6 L743.0 536.1 L745.2 535.5 L747.4 534.8 L749.6 534.1 L751.7 533.2 L753.9 532.4 L756.1 531.5 L758.2 530.5 L760.4 529.4 L762.6 528.3 L764.8 527.1 L766.9 525.9 L769.1 524.6 L771.3 523.3 L773.5 521.9 L775.6 520.4 L777.8 518.9 L780.0 517.3 L782.2 515.7 L784.4 514.0 L786.5 512.2 L788.7 510.4 L790.9 508.6 L793.1 506.6 L795.2 504.7 L797.4 502.7 L799.6 500.6 L801.8 498.5 L803.9 496.3 L806.1 494.1 L808.3 491.8 L810.4 489.5 L812.6 487.1 L814.8 484.7 L817.0 482.2 L819.1 479.7 L821.3 477.2 L823.5 474.6 L825.7 471.9 L827.9 469.2 L830.0 466.5 L832.2 463.8 L834.4 460.9 L836.6 458.1 L838.7 455.2 L840.9 452.3 L843.1 449.3 L845.2 446.3 L847.4 443.3 L849.6 440.3 L851.8 437.2 L853.9 434.0 L856.1 430.9 L858.3 427.7 L860.5 424.5 L862.6 421.3 L864.8 418.0 L867.0 414.7 L869.2 411.4 L871.4 408.1 L873.5 404.7 L875.7 401.3 L877.9 397.9 L880.1 394.5 L882.2 391.0 L884.4 387.6 L886.6 384.1 L888.8 380.6 L890.9 377.1 L893.1 373.6 L895.3 370.1 L897.4 366.6 L899.6 363.0 L901.8 359.5 L904.0 355.9 L906.1 352.3 L908.3 348.8 L910.5 345.2 L912.7 341.6 L914.9 338.1 L917.0 334.5 L919.2 330.9 L921.4 327.3 L923.6 323.8 L925.7 320.2 L927.9 316.6 L930.1 313.1 L932.2 309.5 L934.4 306.0 L936.6 302.5 L938.8 299.0 L940.9 295.5 L943.1 292.0 L945.3 288.5 L947.5 285.0 L949.6 281.6 L951.8 278.2 L954.0 274.8 L956.2 271.4 L958.4 268.0 L960.5 264.7 L962.7 261.4 L964.9 258.1 L967.1 254.8 L969.2 251.5 L971.4 248.3 L973.6 245.1 L975.8 242.0 L977.9 238.8 L980.1 235.8 L982.3 232.7 L984.4 229.7 L986.6 226.7 L988.8 223.7 L991.0 220.8 L993.2 217.9 L995.3 215.0 L997.5 212.2" stroke="#54dc60" stroke-width="1" fill="none" shape-rendering="crispEdges"/>
<path d="M40.5 431.3 L42.7 434.5 L44.8 437.6 L47.0 440.6 L49.2 443.6 L51.4 446.5 L53.5 449.4 L55.7 452.2 L57.9 454.9 L60.1 457.6 L62.2 460.2 L64.4 462.8 L66.6 465.3 L68.8 467.7 L70.9 470.1 L73.1 472.4 L75.3 474.6 L77.5 476.8 L79.7 478.9 L81.8 480.9 L84.0 482.9 L86.2 484.8 L88.3 486.7 L90.5 488.5 L92.7 490.2 L94.9 491.8 L97.1 493.4 L99.2 494.9 L101.4 496.4 L103.6 497.8 L105.8 499.1 L107.9 500.3 L110.1 501.5 L112.3 502.6 L114.4 503.6 L116.6 504.5 L118.8 505.4 L121.0 506.2 L123.1 507.0 L125.3 507.7 L127.5 508.3 L129.7 508.8 L131.9 509.2 L134.0 509.6 L136.2 509.9 L138.4 510.2 L140.6 510.3 L142.7 510.4 L144.9 510.5 L147.1 510.4 L149.2 510.3 L151.4 510.1 L153.6 509.8 L155.8 509.5 L157.9 509.1 L160.1 508.6 L162.3 508.1 L164.5 507.5 L166.6 506.8 L168.8 506.0 L171.0 505.2 L173.2 504.3 L175.3 503.3 L177.5 502.3 L179.7 501.1 L181.9 500.0 L184.0 498.7 L186.2 497.4 L188.4 496.0 L190.6 494.6 L192.8 493.1 L194.9 491.5 L197.1 489.8 L199.3 488.1 L201.5 486.3 L203.6 484.5 L205.8 482.6 L208.0 480.6 L210.1 478.6 L212.3 476.5 L214.5 474.3 L216.7 472.1 L218.9 469.9 L221.0 467.5 L223.2 465.1 L225.4 462.7 L227.5 460.2 L229.7 457.6 L231.9 455.0 L234.1 452.4 L236.2 449.6 L238.4 446.9 L240.6 444.1 L242.8 441.2 L245.0 438.3 L247.1 435.3 L249.3 432.3 L251.5 429.2 L253.6 426.1 L255.8 422.9 L258.0 419.7 L260.2 416.5 L262.4 413.2 L264.5 409.9 L266.7 406.5 L268.9 403.1 L271.0 399.7 L273.2 396.2 L275.4 392.7 L277.6 389.1 L279.8 385.6 L281.9 381.9 L284.1 378.3 L286.3 374.6 L288.5 370.9 L290.6 367.2 L292.8 363.4 L295.0 359.7 L297.2 355.9 L299.3 352.0 L301.5 348.2 L303.7 344.3 L305.8 340.4 L308.0 336.5 L310.2 332.6 L312.4 328.7 L314.6 324.7 L316.7 320.8 L318.9 316.8 L321.1 312.8 L323.2 308.8 L325.4 304.8 L327.6 300.8 L329.8 296.8 L331.9 292.8 L334.1 288.8 L336.3 284.7 L338.5 280.7 L340.7 276.7 L342.8 272.7 L345.0 268.7 L347.2 264.7 L349.3 260.7 L351.5 256.7 L353.7 252.7 L355.9 248.7 L358.1 244.7 L360.2 240.8 L362.4 236.9 L364.6 232.9 L366.8 229.0 L368.9 225.1 L371.1 221.3 L373.3 217.4 L375.4 213.6 L377.6 209.8 L379.8 206.0 L382.0 202.2 L384.2 198.5 L386.3 194.8 L388.5 191.1 L390.7 187.5 L392.8 183.9 L395.0 180.3 L397.2 176.7 L399.4 173.2 L401.6 169.7 L403.7 166.3 L405.9 162.9 L408.1 159.5 L410.2 156.2 L412.4 152.9 L414.6 149.6 L416.8 146.4 L418.9 143.3 L421.1 140.2 L423.3 137.1 L425.5 134.1 L427.7 131.1 L429.8 128.2 L432.0 125.3 L434.2 122.4 L436.3 119.7 L438.5 116.9 L440.7 114.3 L442.9 111.7 L445.1 109.1 L447.2 106.6 L449.4 104.1 L451.6 101.7 L453.8 99.4 L455.9 97.1 L458.1 94.9 L460.3 92.7 L462.5 90.6 L464.6 88.6 L466.8 86.6 L469.0 84.7 L471.2 82.9 L473.3 81.1 L475.5 79.3 L477.7 77.7 L479.8 76.1 L482.0 74.6 L484.2 73.1 L486.4 71.7 L488.5 70.4 L490.7 69.1 L492.9 67.9 L495.1 66.8 L497.2 65.8 L499.4 64.8 L501.6 63.9 L503.8 63.0 L506.0 62.3 L508.1 61.6 L510.3 60.9 L512.5 60.4 L514.7 59.9 L516.8 59.4 L519.0 59.1 L521.2 58.8 L523.3 58.6 L525.5 58.5 L527.7 58.4 L529.9 58.4 L532.0 58.5 L534.2 58.6 L536.4 58.9 L538.6 59.2 L540.8 59.5 L542.9 60.0 L545.1 60.5 L547.3 61.0 L549.5 61.7 L551.6 62.4 L553.8 63.2 L556.0 64.1 L558.1 65.0 L560.3 66.0 L562.5 67.0 L564.7 68.2 L566.9 69.4 L569.0 70.7 L571.2 72.0 L573.4 73.4 L575.6 74.9 L577.7 76.4 L579.9 78.0 L582.1 79.7 L584.2 81.4 L586.4 83.2 L588.6 85.1 L590.8 87.0 L592.9 89.0 L595.1 91.1 L597.3 93.2 L599.5 95.3 L601.6 97.6 L603.8 99.9 L606.0 102.2 L608.2 104.6 L610.4 107.1 L612.5 109.6 L614.7 112.2 L616.9 114.8 L619.1 117.5 L621.2 120.2 L623.4 123.0 L625.6 125.9 L627.8 128.7 L629.9 131.7 L632.1 134.7 L634.3 137.7 L636.4 140.8 L638.6 143.9 L640.8 147.1 L643.0 150.3 L645.1 153.5 L647.3 156.8 L649.5 160.2 L651.7 163.6 L653.9 167.0 L656.0 170.4 L658.2 173.9 L660.4 177.4 L662.6 181.0 L664.7 184.6 L666.9 188.2 L669.1 191.9 L671.2 195.5 L673.4 199.3 L675.6 203.0 L677.8 206.8 L679.9 210.5 L682.1 214.4 L684.3 218.2 L686.5 222.0 L688.6 225.9 L690.8 229.8 L693.0 233.7 L695.2 237.6 L697.4 241.6 L699.5 245.5 L701.7 249.5 L703.9 253.5 L706.1 257.5 L708.2 261.5 L710.4 265.5 L712.6 269.5 L714.8 273.5 L716.9 277.5 L719.1 281.5 L721.3 285.5 L723.4 289.6 L725.6 293.6 L727.8 297.6 L730.0 301.6 L732.1 305.6 L734.3 309.6 L736.5 313.6 L738.7 317.6 L740.9 321.6 L743.0 325.5 L745.2 329.5 L747.4 333.4 L749.6 337.3 L751.7 341.2 L753.9 345.1 L756.1 349.0 L758.2 352.8 L760.4 356.6 L762.6 360.4 L764.8 364.2 L766.9 368.0 L769.1 371.7 L771.3 375.4 L773.5 379.0 L775.6 382.7 L777.8 386.3 L780.0 389.9 L782.2 393.4 L784.4 396.9 L786.5 400.4 L788.7 403.8 L790.9 407.2 L793.1 410.6 L795.2 413.9 L797.4 417.2 L799.6 420.4 L801.8 423.6 L803.9 426.7 L806.1 429.8 L808.3 432.9 L810.4 435.9 L812.6 438.9 L814.8 441.8 L817.0 444.6 L819.1 447.4 L821.3 450.2 L823.5 452.9 L825.7 455.6 L827.9 458.2 L830.0 460.7 L832.2 463.2 L834.4 465.6 L836.6 468.0 L838.7 470.3 L840.9 472.6 L843.1 474.8 L845.2 476.9 L847.4 479.0 L849.6 481.0 L851.8 483.0 L853.9 484.9 L856.1 486.7 L858.3 488.5 L860.5 490.2 L862.6 491.8 L864.8 493.4 L867.0 494.9 L869.2 496.3 L871.4 497.7 L873.5 499.0 L875.7 500.3 L877.9 501.4 L880.1 502.5 L882.2 503.6 L884.4 504.5 L886.6 505.4 L888.8 506.2 L890.9 507.0 L893.1 507.7 L895.3 508.3 L897.4 508.8 L899.6 509.3 L901.8 509.7 L904.0 510.0 L906.1 510.3 L908.3 510.4 L910.5 510.6 L912.7 510.6 L914.9 510.6 L917.0 510.5 L919.2 510.3 L921.4 510.1 L923.6 509.7 L925.7 509.3 L927.9 508.9 L930.1 508.4 L932.2 507.8 L934.4 507.1 L936.6 506.4 L938.8 505.5 L940.9 504.7 L943.1 503.7 L945.3 502.7 L947.5 501.6 L949.6 500.4 L951.8 499.2 L954.0 497.9 L956.2 496.6 L958.4 495.1 L960.5 493.6 L962.7 492.1 L964.9 490.5 L967.1 488.8 L969.2 487.0 L971.4 485.2 L973.6 483.3 L975.8 481.4 L977.9 479.3 L980.1 477.3 L982.3 475.1 L984.4 473.0 L986.6 470.7 L988.8 468.4 L991.0 466.0 L993.2 463.6 L995.3 461.1 L997.5 458.6" stroke="#1010aa" stroke-width="1.5" fill="none" shape-rendering="crispEdges"/>
<text class="ax axl" x="32.2" y="22.9" text-anchor="end">120V</text>
<text class="ax axl" x="32.2" y="76.1" text-anchor="end">100V</text>
<text class="ax axl" x="32.2" y="129.3" text-anchor="end">80V</text>
<text class="ax axl" x="32.2" y="182.5" text-anchor="end">60V</text>
<text class="ax axl" x="32.2" y="235.7" text-anchor="end">40V</text>
<text class="ax axl" x="32.2" y="288.9" text-anchor="end">20V</text>
<text class="ax axl" x="32.2" y="342.1" text-anchor="end">0V</text>
<text class="ax axl" x="32.2" y="395.3" text-anchor="end">-20V</text>
<text class="ax axl" x="32.2" y="448.5" text-anchor="end">-40V</text>
<text class="ax axl" x="32.2" y="501.7" text-anchor="end">-60V</text>
<text class="ax axl" x="32.2" y="554.9" text-anchor="end">-80V</text>
<text class="ax axr" x="1035.6" y="22.9" text-anchor="end">10A</text>
<text class="ax axr" x="1035.6" y="76.1" text-anchor="end">8A</text>
<text class="ax axr" x="1035.6" y="129.3" text-anchor="end">6A</text>
<text class="ax axr" x="1035.6" y="182.5" text-anchor="end">4A</text>
<text class="ax axr" x="1035.6" y="235.7" text-anchor="end">2A</text>
<text class="ax axr" x="1035.6" y="288.9" text-anchor="end">0A</text>
<text class="ax axr" x="1035.6" y="342.1" text-anchor="end">-2A</text>
<text class="ax axr" x="1035.6" y="395.3" text-anchor="end">-4A</text>
<text class="ax axr" x="1035.6" y="448.5" text-anchor="end">-6A</text>
<text class="ax axr" x="1035.6" y="501.7" text-anchor="end">-8A</text>
<text class="ax axr" x="1035.6" y="554.9" text-anchor="end">-10A</text>
<text class="ax" x="41.0" y="570.5" text-anchor="middle">0ms</text>
<text class="ax" x="128.0" y="570.5" text-anchor="middle">1ms</text>
<text class="ax" x="215.0" y="570.5" text-anchor="middle">2ms</text>
<text class="ax" x="302.0" y="570.5" text-anchor="middle">3ms</text>
<text class="ax" x="389.0" y="570.5" text-anchor="middle">4ms</text>
<text class="ax" x="476.0" y="570.5" text-anchor="middle">5ms</text>
<text class="ax" x="563.0" y="570.5" text-anchor="middle">6ms</text>
<text class="ax" x="650.0" y="570.5" text-anchor="middle">7ms</text>
<text class="ax" x="737.0" y="570.5" text-anchor="middle">8ms</text>
<text class="ax" x="824.0" y="570.5" text-anchor="middle">9ms</text>
<text class="ax" x="911.0" y="570.5" text-anchor="middle">10ms</text>
<text class="ax axt" x="278.8" y="12.4" text-anchor="middle" style="fill:#35e035;stroke:#35e035">V(n012)</text>
<text class="ax axt" x="757.4" y="12.4" text-anchor="middle" style="fill:#1616cc;stroke:#1616cc">I(L8)</text>
<ellipse cx="405.6" cy="167" rx="21" ry="23.600" fill="none" stroke="#dc2a36" stroke-width="3"/>
</svg>

<!-- status bar -->
<div id="status"></div>
<div class="abs" style="left:1078px;top:744px;width:1px;height:15px;background:#d0d0d0"></div>
<svg class="abs" style="left:1086px;top:748px" width="11" height="11" viewBox="0 0 11 11">
  <g fill="#c4c4c4"><rect x="8" y="2" width="2" height="2"/><rect x="5" y="5" width="2" height="2"/><rect x="8" y="5" width="2" height="2"/><rect x="2" y="8" width="2" height="2"/><rect x="5" y="8" width="2" height="2"/><rect x="8" y="8" width="2" height="2"/></g>
</svg>
<div id="stext">x = 4.20ms</div><div id="stext2">y = 64.74V, 4.47A</div>

<!-- annotation -->
<svg class="abs" style="left:20px;top:700px" width="240" height="110" viewBox="0 0 240 110">
  <ellipse cx="118" cy="52.600" rx="105.800" ry="37.600" fill="none" stroke="#dc2a36" stroke-width="3"/>
</svg>

</body>
</html>
